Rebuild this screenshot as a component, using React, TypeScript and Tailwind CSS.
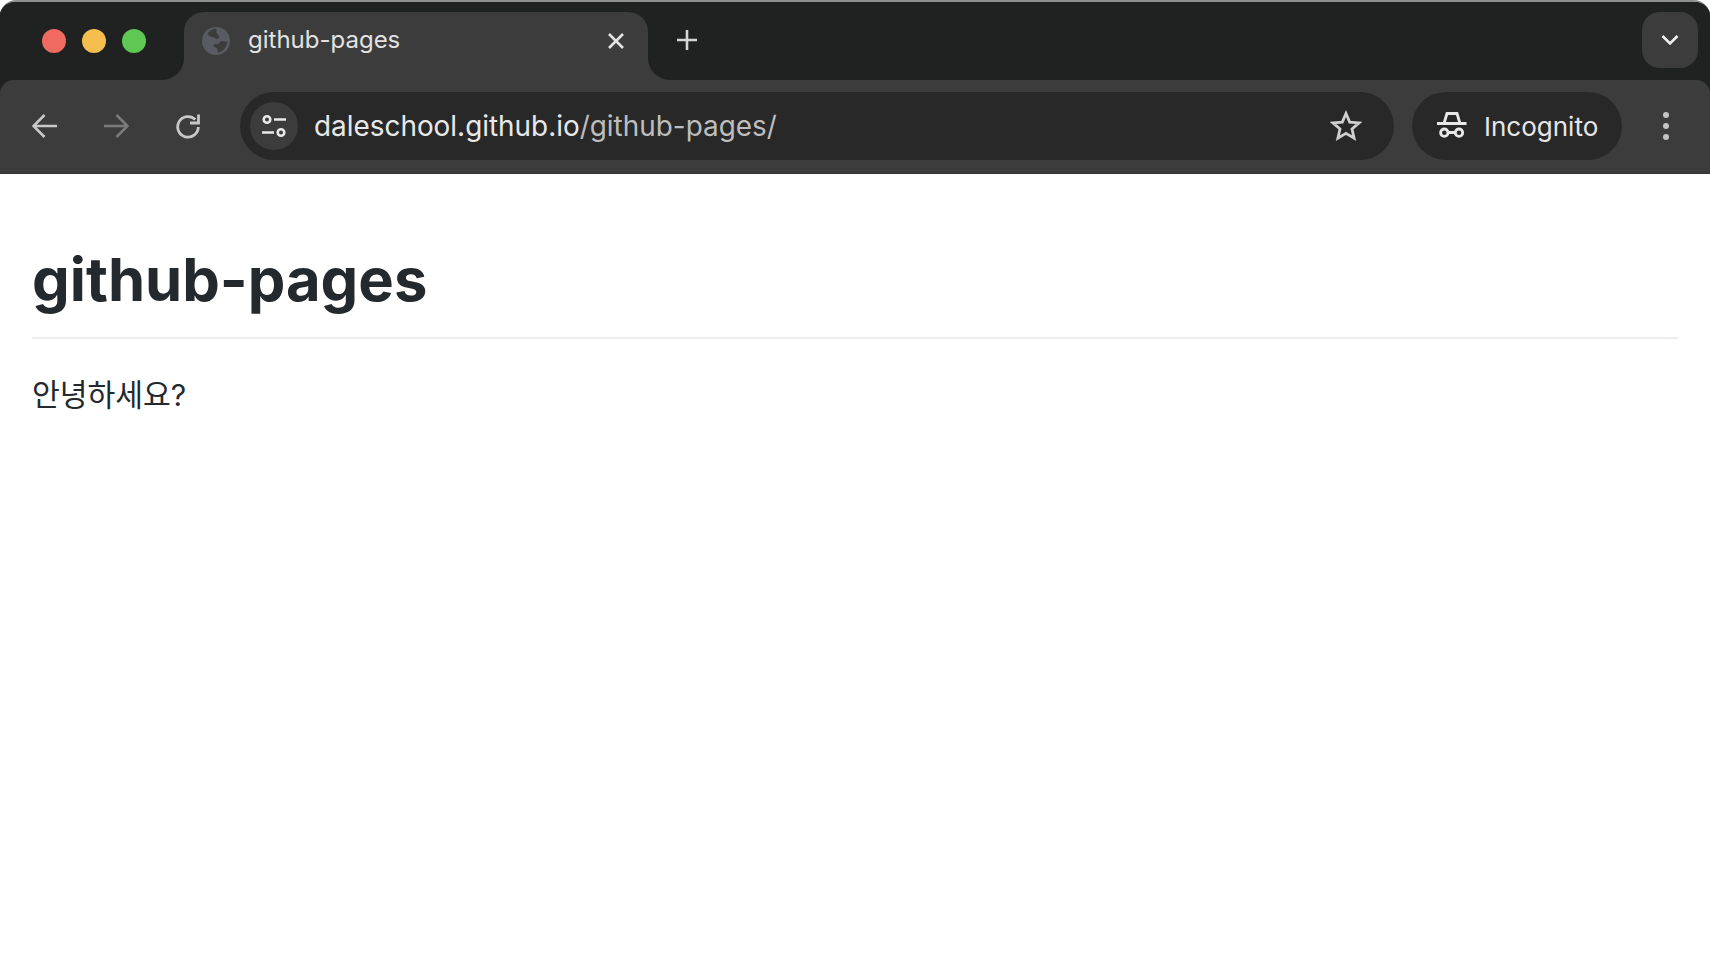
const Dots = () => (
  <div className="flex w-[184px] h-[78px] bg-[#202221] rounded-br-[22px] items-center pl-[42px] gap-[16px]">
    <span className="w-6 h-6 rounded-full bg-[#ef6a5f]" />
    <span className="w-6 h-6 rounded-full bg-[#f5be4f]" />
    <span className="w-6 h-6 rounded-full bg-[#5fc854]" />
  </div>
);

const Globe = () => (
  <svg width="28" height="28" viewBox="0 0 28 28">
    <circle cx="14" cy="14" r="14" fill="#585b61" />
    <path d="M14 1.500c-3.500.3-7 2.500-8.700 5.500 1.500 2 3.700 3 6.200 3.300 1 .2 1.500 1.700 3 1.700 2 0 3-1.500 2.500-3-.5-1.200-2-1.700-2.500-3-.3-1.500.5-3-.5-4.500z" fill="#3c3c3c" />
    <path d="M25.500 15c-2-.5-5-1.200-6.500-.5-1.500.7-1.500 2-3 2.500-1.500.5-3-.5-4 .5-1 1 0 2.500 1.500 3 1 .5 2 1 2 2.500 0 1 .5 2 1 2.500 4.500-1 8-5 9-10.500z" fill="#3c3c3c" />
  </svg>
);

const Tab = () => (
  <div className="w-[464px] h-[78px] bg-[#202221] pt-[10px]">
    <div className="h-[68px] bg-[#3c3c3c] rounded-t-[20px] flex items-center pl-[18px] pb-[10px]">
      <Globe />
      <span className="ml-[18px] pb-[2px] text-[24px] text-[#e2e2e2]">github-pages</span>
      <svg className="ml-auto mr-[22px]" width="20" height="20" viewBox="0 0 20 20" stroke="#e4e4e4" strokeWidth="2.600" fill="none">
        <path d="M3 3l14 14M17 3L3 17" />
      </svg>
    </div>
  </div>
);

const TabStrip = () => (
  <div className="flex h-[78px] bg-[#3c3c3c]">
    <Dots />
    <Tab />
    <div className="flex flex-1 bg-[#202221] rounded-bl-[22px] items-center pb-0.5 pr-3">
      <svg className="ml-[28px]" width="22" height="22" viewBox="0 0 22 22" stroke="#d6d6d6" strokeWidth="2.600" fill="none">
        <path d="M11 1v20M1 11h20" />
      </svg>
      <div className="ml-auto w-14 h-14 rounded-[18px] bg-[#3c3c3c] flex items-center justify-center">
        <svg width="18" height="12" viewBox="0 0 18 12" stroke="#eeeeee" strokeWidth="2.600" fill="none">
          <path d="M1.500 2l7.500 7.500L16.500 2" />
        </svg>
      </div>
    </div>
  </div>
);

const NavIcons = () => (
  <div className="flex w-[240px] items-center pl-[32px]">
    <svg width="25" height="26" viewBox="0 0 25 26" stroke="#c8c8c8" strokeWidth="2.600" fill="none">
      <path d="M25 13H2M12.500 2L1.500 13l11 11" />
    </svg>
    <svg className="ml-[47px]" width="25" height="26" viewBox="0 0 25 26" stroke="#7b7b7b" strokeWidth="2.600" fill="none">
      <path d="M0 13h23M12.500 2l11 11-11 11" />
    </svg>
    <svg className="ml-[46px]" width="26" height="26" viewBox="0 0 26 26" stroke="#c8c8c8" strokeWidth="2.800" fill="none">
      <path d="M20.300 6.600A10.300 10.300 0 1 0 23.300 14" />
      <path d="M23.500 1.500v8.500H15" />
    </svg>
  </div>
);

const Omnibox = () => (
  <div className="flex flex-1 h-[68px] bg-[#282828] rounded-full items-center pl-[10px] pr-[32px]">
    <div className="w-12 h-12 rounded-full bg-[#3c3c3c] flex items-center justify-center">
      <svg width="26" height="26" viewBox="0 0 26 26" stroke="#e8e8e8" strokeWidth="2.600" fill="none">
        <circle cx="6" cy="6.500" r="3.300" />
        <circle cx="20" cy="19.500" r="3.300" />
        <path d="M13 6.500h12M1 19.500h12" />
      </svg>
    </div>
    <span className="ml-[16px] pt-[2px] text-[27.900px] text-[#e8e8e8]">
      daleschool.github.io<span className="text-[#bdbdbd]">/github-pages/</span>
    </span>
    <svg className="ml-auto" width="32" height="32" viewBox="0 0 32 32" stroke="#cfcfcf" strokeWidth="2.800" fill="none">
      <path d="M16 3.500l3.700 8.600 9.300.8-7 6.100 2.100 9.100L16 23.300l-8.100 4.800 2.100-9.100-7-6.100 9.300-.8z" />
    </svg>
  </div>
);

const IncognitoPill = () => (
  <div className="flex w-[210px] h-[68px] ml-[18px] bg-[#282828] rounded-full items-center pl-[25px]">
    <svg width="30" height="28" viewBox="0 0 30 28" stroke="#e8e8e8" strokeWidth="2.800" fill="none">
      <path d="M0 11.500h29.500" />
      <path d="M7 11.500L10 1.500h10l3 10" />
      <circle cx="7.300" cy="20.700" r="3.700" />
      <circle cx="22" cy="20.700" r="3.700" />
      <path d="M11 20.500h7.500" />
    </svg>
    <span className="ml-[17px] text-[26px] text-[#e6e6e6]">Incognito</span>
  </div>
);

const Toolbar = () => (
  <div className="flex h-[94px] bg-[#3c3c3c] rounded-t-[14px] border-b border-b-[#333333] pb-px items-center">
    <NavIcons />
    <Omnibox />
    <IncognitoPill />
    <div className="flex flex-col w-[88px] items-center gap-[5px]">
      <span className="w-1.5 h-1.5 rounded-full bg-[#c4c4c4]" />
      <span className="w-1.5 h-1.5 rounded-full bg-[#c4c4c4]" />
      <span className="w-1.5 h-1.5 rounded-full bg-[#c4c4c4]" />
    </div>
  </div>
);

export default function App() {
  return (
    <div className="min-h-screen bg-white font-['Inter','Noto_Sans_CJK_KR',sans-serif]">
      <header className="bg-[#202221] rounded-t-[16px] border-t-2 border-t-[#8f8f8f] h-[174px] overflow-hidden">
        <TabStrip />
        <Toolbar />
      </header>
      <main className="px-8 pt-[68px]">
        <h1 className="text-[59.700px] leading-[75px] font-bold text-[#24292e] pb-[20px] border-b-2 border-b-[#eaecef]">
          github-pages
        </h1>
        <p className="mt-[36px] text-[30.200px] leading-[40px] text-[#24292e]">안녕하세요?</p>
      </main>
    </div>
  );
}
